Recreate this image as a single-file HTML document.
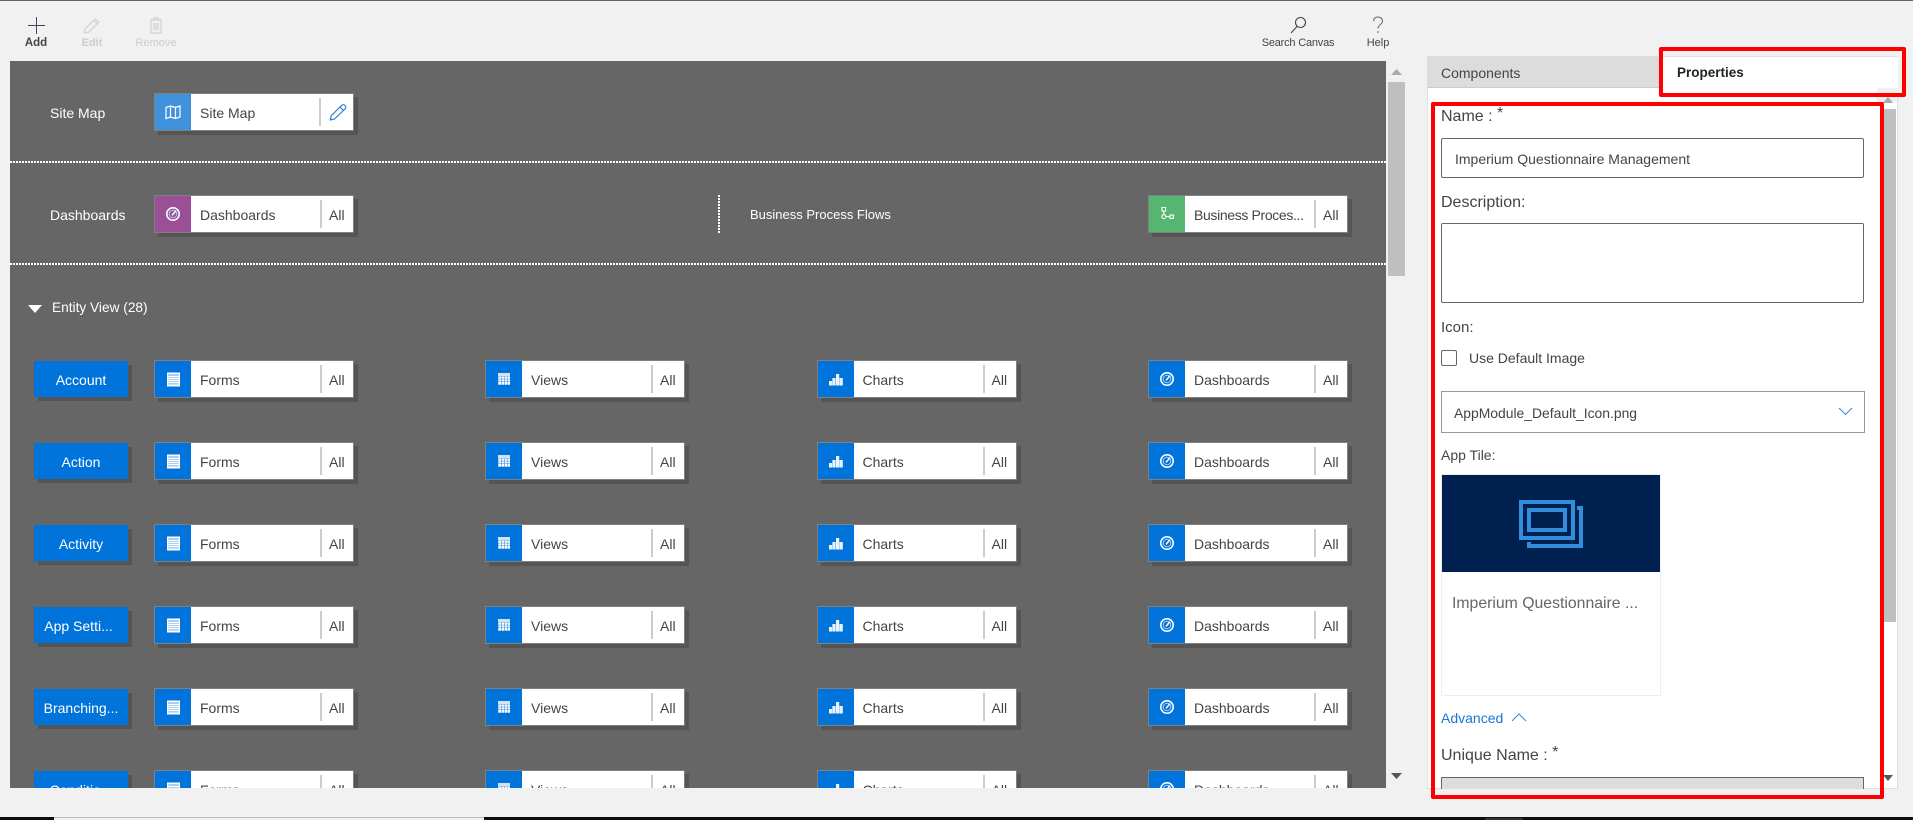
<!DOCTYPE html>
<html>
<head>
<meta charset="utf-8">
<style>
html,body{margin:0;padding:0;width:1913px;height:820px;overflow:hidden;background:#f1f1f1;font-family:"Liberation Sans",sans-serif;color:#444}
*{box-sizing:border-box}
.a{position:absolute}
.t{position:absolute;white-space:nowrap;line-height:20px;height:20px}
#canvas{position:absolute;left:0;top:0;width:1913px;height:820px;clip-path:inset(61px 527px 32px 10px)}
#canvasbg{position:absolute;left:10px;top:61px;width:1376px;height:727px;background:#666}
.w{color:#fff;font-size:14px}
.dot{position:absolute;left:10px;width:1376px;height:2px;background-image:linear-gradient(90deg,#fff 2px,transparent 2px);background-size:3px 2px}
.card{position:absolute;width:200px;height:38px;background:#fff;border:1px solid #808080;box-shadow:4px 4px 0 #555;font-size:14px;color:#444}
.card .ic{position:absolute;left:0;top:0;width:36px;height:36px;background:#0074da}
.card svg{position:absolute;left:10px;top:10px;width:16px;height:16px}
.card .n{position:absolute;left:45px;top:9px;line-height:20px;white-space:nowrap}
.card .s{position:absolute;left:165px;top:4px;width:2px;height:28px;background:#ccc}
.card .l{position:absolute;left:174px;top:9px;line-height:20px}
.c1{left:154px}.c2{left:485px}.c3{left:816.5px}.c4{left:1148px}
.btn{position:absolute;left:34px;width:94px;height:36px;background:#0074da;box-shadow:4px 4px 0 #555;color:#fff;font-size:14px;line-height:38px;text-align:center;white-space:nowrap}
.tb{position:absolute;font-size:11px;line-height:16px;top:35px;text-align:center;white-space:nowrap;color:#444}
.lbl{position:absolute;left:1441px;font-size:16px;line-height:20px;white-space:nowrap;color:#444}
.inp{position:absolute;left:1441px;width:423px;border:1px solid #666;border-radius:2px;background:#fff}
.red{position:absolute;border:4px solid #f00;border-radius:2px;z-index:5}
</style>
</head>
<body>
<svg width="0" height="0" style="position:absolute">
<defs>
<symbol id="f" viewBox="0 0 16 16"><rect x="2" y="1.5" width="13" height="14" fill="#fff"/><rect x="3.2" y="3" width="10.6" height="2" fill="#a9cdf0"/><rect x="3.2" y="6" width="10.6" height="1" fill="#a9cdf0"/><rect x="3.2" y="8" width="10.6" height="1" fill="#a9cdf0"/><rect x="3.2" y="10" width="10.6" height="1" fill="#a9cdf0"/><rect x="3.2" y="12" width="10.6" height="1.6" fill="#a9cdf0"/></symbol>
<symbol id="v" viewBox="0 0 16 16"><rect x="2" y="2" width="12" height="12" fill="#cfe3f7"/><g fill="#4a9ae4"><rect x="2" y="5.4" width="12" height="8.6"/></g><g fill="#fff"><rect x="2.4" y="5.8" width="2.6" height="2"/><rect x="5.7" y="5.8" width="2.6" height="2"/><rect x="9" y="5.8" width="2.2" height="2"/><rect x="11.8" y="5.8" width="2.2" height="2"/><rect x="2.4" y="8.4" width="2.6" height="2"/><rect x="5.7" y="8.4" width="2.6" height="2"/><rect x="9" y="8.4" width="2.2" height="2"/><rect x="11.8" y="8.4" width="2.2" height="2"/><rect x="2.4" y="11" width="2.6" height="2.6"/><rect x="5.7" y="11" width="2.6" height="2.6"/><rect x="9" y="11" width="2.2" height="2.6"/><rect x="11.8" y="11" width="2.2" height="2.6"/></g></symbol>
<symbol id="c" viewBox="0 0 16 16"><g fill="#eaf3fc"><rect x="1" y="10" width="3.2" height="4.5"/><rect x="4.4" y="7" width="3.2" height="7.5"/><rect x="8" y="3" width="3.2" height="11.5"/><rect x="11.4" y="7" width="3.4" height="7.5"/></g></symbol>
<symbol id="d" viewBox="0 0 16 16"><circle cx="8" cy="8" r="6.2" fill="none" stroke="#fff" stroke-width="1.6"/><circle cx="8" cy="8" r="3.8" fill="none" stroke="#a9cdf0" stroke-width="1"/><path d="M7 9.400 11 4.600" stroke="#fff" stroke-width="1.5" fill="none"/></symbol>
<symbol id="g" viewBox="0 0 16 16"><rect x="3" y="1.5" width="3.6" height="3.6" fill="none" stroke="#fff" stroke-width="1.1"/><circle cx="4.800" cy="10.600" r="2" fill="none" stroke="#fff" stroke-width="1.1"/><rect x="11" y="9" width="3.4" height="3.4" fill="none" stroke="#fff" stroke-width="1.1"/><path d="M4.800 5V8.600M6.800 10.600H11" stroke="#fff" stroke-width="1.1" fill="none"/></symbol>
<symbol id="m" viewBox="0 0 16 16"><path d="M1 3.500 5.500 2 10.500 3.500 15 2V13L10.500 14.500 5.500 13 1 14.500ZM5.500 2V13M10.500 3.500V14.500" fill="none" stroke="#fff" stroke-width="1.2"/></symbol>
</defs>
</svg>

<div class="a" style="left:0;top:0;width:1913px;height:1px;background:#666"></div>

<!-- toolbar -->
<svg class="a" style="left:28px;top:17px" width="17" height="17"><path d="M0 8.500H17" stroke="#444" stroke-width="1"/><path d="M8.500 0V17" stroke="#5a3a70" stroke-width="1"/></svg>
<div class="tb" style="left:6px;width:60px;font-size:11.5px;font-weight:700;color:#444">Add</div>
<svg class="a" style="left:83px;top:17px" width="18" height="17" fill="none" stroke="#d0d0d0" stroke-width="1.2"><path d="M2 12 12 2 16 5 6 15 1.500 16Z"/><path d="M10.500 3.500 14.500 6.800"/></svg>
<div class="tb" style="left:62px;width:60px;color:#ccc;font-weight:700">Edit</div>
<svg class="a" style="left:149px;top:17px" width="14" height="17" fill="none" stroke="#d0d0d0" stroke-width="1.2"><path d="M1 3H13M2 3V16H12V3M5 3V1H9V3M5 6V13M7 6V13M9 6V13"/></svg>
<div class="tb" style="left:126px;width:60px;color:#ccc">Remove</div>
<svg class="a" style="left:1290px;top:16px" width="17" height="18" fill="none" stroke="#444" stroke-width="1.1"><circle cx="10.500" cy="6.500" r="5"/><path d="M7 10.500 1 17"/></svg>
<div class="tb" style="left:1258px;width:80px;letter-spacing:-.2px">Search Canvas</div>
<svg class="a" style="left:1372px;top:16px" width="12" height="18" fill="none" stroke="#666" stroke-width="1"><path d="M1.500 5C1.500 2.500 3.500 1 6 1S10.500 2.500 10.500 5C10.500 8.500 6 8.500 6 12.500"/><path d="M6 15V17"/></svg>
<div class="tb" style="left:1358px;width:40px">Help</div>

<!-- canvas -->
<div id="canvas">
<div id="canvasbg"></div>
<div class="t w" style="left:50px;top:103px">Site Map</div>
<div class="card c1" style="top:93px"><div class="ic" style="background:#4192dd"><svg><use href="#m"/></svg></div><div class="n">Site Map</div><div class="s" style="left:164px"></div>
<svg style="left:174px;top:9px;width:18px;height:18px" viewBox="0 0 18 18" fill="none" stroke="#2b7cdc" stroke-width="1.2"><path d="M2 13 12.500 2.500C13.500 1.500 15 1.500 16 2.500S17 5 16 6L5.500 16 1.500 17Z"/><path d="M11 4 14.500 7.500"/></svg></div>
<div class="dot" style="top:161px"></div>

<div class="t w" style="left:50px;top:205px">Dashboards</div>
<div class="card c1" style="top:195px"><div class="ic" style="background:#9b4f96"><svg><use href="#d"/></svg></div><div class="n">Dashboards</div><div class="s"></div><div class="l">All</div></div>
<div class="a" style="left:718px;top:195px;width:2px;height:38px;background-image:linear-gradient(#fff 2px,transparent 2px);background-size:2px 3px"></div>
<div class="t w" style="left:750px;top:205px;font-size:13px">Business Process Flows</div>
<div class="card c4" style="top:195px"><div class="ic" style="background:#54b671"><svg><use href="#g"/></svg></div><div class="n" style="letter-spacing:-.35px">Business Proces...</div><div class="s"></div><div class="l">All</div></div>
<div class="dot" style="top:263px"></div>

<svg class="a" style="left:28px;top:305px" width="14" height="8"><path d="M0 0H14L7 8Z" fill="#fff"/></svg>
<div class="t w" style="left:52px;top:298px;font-size:13.7px">Entity View (28)</div>

<div class="btn" style="top:361px">Account</div>
<div class="card c1" style="top:360px"><div class="ic"><svg><use href="#f"/></svg></div><div class="n">Forms</div><div class="s"></div><div class="l">All</div></div>
<div class="card c2" style="top:360px"><div class="ic"><svg><use href="#v"/></svg></div><div class="n">Views</div><div class="s"></div><div class="l">All</div></div>
<div class="card c3" style="top:360px"><div class="ic"><svg><use href="#c"/></svg></div><div class="n">Charts</div><div class="s"></div><div class="l">All</div></div>
<div class="card c4" style="top:360px"><div class="ic"><svg><use href="#d"/></svg></div><div class="n">Dashboards</div><div class="s"></div><div class="l">All</div></div>

<div class="btn" style="top:443px">Action</div>
<div class="card c1" style="top:442px"><div class="ic"><svg><use href="#f"/></svg></div><div class="n">Forms</div><div class="s"></div><div class="l">All</div></div>
<div class="card c2" style="top:442px"><div class="ic"><svg><use href="#v"/></svg></div><div class="n">Views</div><div class="s"></div><div class="l">All</div></div>
<div class="card c3" style="top:442px"><div class="ic"><svg><use href="#c"/></svg></div><div class="n">Charts</div><div class="s"></div><div class="l">All</div></div>
<div class="card c4" style="top:442px"><div class="ic"><svg><use href="#d"/></svg></div><div class="n">Dashboards</div><div class="s"></div><div class="l">All</div></div>

<div class="btn" style="top:525px">Activity</div>
<div class="card c1" style="top:524px"><div class="ic"><svg><use href="#f"/></svg></div><div class="n">Forms</div><div class="s"></div><div class="l">All</div></div>
<div class="card c2" style="top:524px"><div class="ic"><svg><use href="#v"/></svg></div><div class="n">Views</div><div class="s"></div><div class="l">All</div></div>
<div class="card c3" style="top:524px"><div class="ic"><svg><use href="#c"/></svg></div><div class="n">Charts</div><div class="s"></div><div class="l">All</div></div>
<div class="card c4" style="top:524px"><div class="ic"><svg><use href="#d"/></svg></div><div class="n">Dashboards</div><div class="s"></div><div class="l">All</div></div>

<div class="btn" style="top:607px;padding-right:5px">App Setti...</div>
<div class="card c1" style="top:606px"><div class="ic"><svg><use href="#f"/></svg></div><div class="n">Forms</div><div class="s"></div><div class="l">All</div></div>
<div class="card c2" style="top:606px"><div class="ic"><svg><use href="#v"/></svg></div><div class="n">Views</div><div class="s"></div><div class="l">All</div></div>
<div class="card c3" style="top:606px"><div class="ic"><svg><use href="#c"/></svg></div><div class="n">Charts</div><div class="s"></div><div class="l">All</div></div>
<div class="card c4" style="top:606px"><div class="ic"><svg><use href="#d"/></svg></div><div class="n">Dashboards</div><div class="s"></div><div class="l">All</div></div>

<div class="btn" style="top:689px">Branching...</div>
<div class="card c1" style="top:688px"><div class="ic"><svg><use href="#f"/></svg></div><div class="n">Forms</div><div class="s"></div><div class="l">All</div></div>
<div class="card c2" style="top:688px"><div class="ic"><svg><use href="#v"/></svg></div><div class="n">Views</div><div class="s"></div><div class="l">All</div></div>
<div class="card c3" style="top:688px"><div class="ic"><svg><use href="#c"/></svg></div><div class="n">Charts</div><div class="s"></div><div class="l">All</div></div>
<div class="card c4" style="top:688px"><div class="ic"><svg><use href="#d"/></svg></div><div class="n">Dashboards</div><div class="s"></div><div class="l">All</div></div>

<div class="btn" style="top:771px">Conditio...</div>
<div class="card c1" style="top:770px"><div class="ic"><svg><use href="#f"/></svg></div><div class="n">Forms</div><div class="s"></div><div class="l">All</div></div>
<div class="card c2" style="top:770px"><div class="ic"><svg><use href="#v"/></svg></div><div class="n">Views</div><div class="s"></div><div class="l">All</div></div>
<div class="card c3" style="top:770px"><div class="ic"><svg><use href="#c"/></svg></div><div class="n">Charts</div><div class="s"></div><div class="l">All</div></div>
<div class="card c4" style="top:770px"><div class="ic"><svg><use href="#d"/></svg></div><div class="n">Dashboards</div><div class="s"></div><div class="l">All</div></div>
</div>

<!-- canvas scrollbar -->
<svg class="a" style="left:1391px;top:69px" width="11" height="6"><path d="M0 6H11L5.500 0Z" fill="#aaa"/></svg>
<div class="a" style="left:1388px;top:82px;width:17px;height:194px;background:#bfbfbf"></div>
<svg class="a" style="left:1391px;top:773px" width="11" height="6"><path d="M0 0H11L5.500 6Z" fill="#555"/></svg>

<!-- right panel -->
<div class="a" style="left:1427px;top:56px;width:471px;height:733px;background:#fff;border:1px solid #e0e0e0"></div>
<div class="a" style="left:1427px;top:56px;width:236px;height:32px;background:#dcdcdc;border-bottom:1px solid #ccc"></div>
<div class="t" style="left:1441px;top:63px;font-size:14px;color:#444">Components</div>
<div class="a" style="left:1663px;top:57px;width:235px;height:36px;background:#fff"></div>
<div class="t" style="left:1677px;top:63px;font-size:13.5px;font-weight:700;color:#222">Properties</div>

<div class="a" style="left:1877px;top:88px;width:20px;height:14px;background:#f0f0f0"></div>
<svg class="a" style="left:1883px;top:97px" width="10" height="6"><path d="M0 6H10L5 0Z" fill="#aaa"/></svg>
<div class="a" style="left:1884px;top:109px;width:12px;height:513px;background:#bfbfbf"></div>
<svg class="a" style="left:1883px;top:775px" width="10" height="6"><path d="M0 0H10L5 6Z" fill="#555"/></svg>

<div class="lbl" style="top:107px">Name : <span style="position:relative;top:-3px">*</span></div>
<div class="inp" style="top:138px;height:40px"></div>
<div class="t" style="left:1455px;top:149px;font-size:14px">Imperium Questionnaire Management</div>
<div class="lbl" style="top:193px">Description:</div>
<div class="inp" style="top:223px;height:80px"></div>
<div class="lbl" style="top:318px;font-size:15px">Icon:</div>
<div class="a" style="left:1441px;top:350px;width:16px;height:16px;border:1px solid #666;border-radius:2px;background:#fff"></div>
<div class="t" style="left:1469px;top:348px;font-size:14px">Use Default Image</div>
<div class="a" style="left:1441px;top:391px;width:424px;height:42px;border:1px solid #999;background:#fff"></div>
<div class="t" style="left:1454px;top:403px;font-size:13.9px">AppModule_Default_Icon.png</div>
<svg class="a" style="left:1838px;top:407px" width="15" height="9"><path d="M1 1 7.500 7.500 14 1" fill="none" stroke="#3b86dc" stroke-width="1"/></svg>
<div class="t" style="left:1441px;top:445px;font-size:14px">App Tile:</div>
<div class="a" style="left:1441px;top:474px;width:220px;height:222px;background:#fff;border:1px solid #eee"></div>
<div class="a" style="left:1442px;top:475px;width:218px;height:97px;background:#002050"></div>
<svg class="a" style="left:1519px;top:500px" width="64" height="48" fill="none" stroke="#338cdc" stroke-width="4"><path d="M58 8H62V46H10V42"/><rect x="2" y="2" width="52" height="36"/><rect x="10" y="10" width="36" height="20"/></svg>
<div class="t" style="left:1452px;top:594px;font-size:15.8px;color:#666">Imperium Questionnaire ...</div>
<div class="t" style="left:1441px;top:708px;font-size:14px;color:#1a76d2">Advanced</div>
<svg class="a" style="left:1511px;top:713px" width="16" height="9"><path d="M1 8 8 1 15 8" fill="none" stroke="#3b86dc" stroke-width="1"/></svg>
<div class="lbl" style="top:746px">Unique Name : <span style="position:relative;top:-3px">*</span></div>
<div class="a" style="left:1441px;top:777px;width:423px;height:12px;background:#ddd;border:1px solid #666;border-bottom:none"></div>

<div class="red" style="left:1659px;top:47px;width:247px;height:50px"></div>
<div class="red" style="left:1431px;top:102px;width:453px;height:697px"></div>

<!-- bottom strip -->
<div class="a" style="left:0;top:817px;width:1913px;height:3px;background:#0d0d0d"></div>
<div class="a" style="left:54px;top:817px;width:430px;height:3px;background:#f1f1f1;border-top:1px solid #bbb"></div>
<div class="a" style="left:1485px;top:818px;width:38px;height:2px;background:#333"></div>
</body>
</html>
